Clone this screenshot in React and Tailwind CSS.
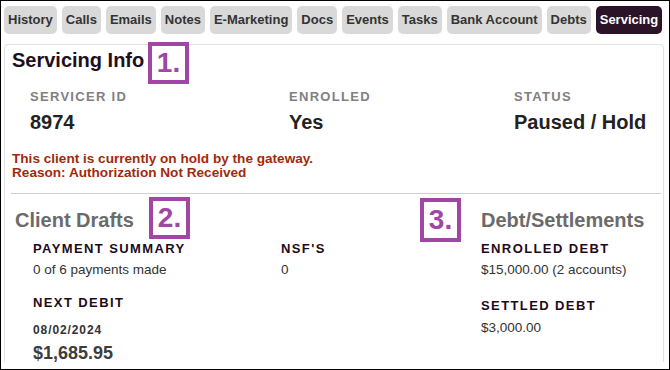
import React from "react";

const tabs = ["History", "Calls", "Emails", "Notes", "E-Marketing", "Docs", "Events", "Tasks", "Bank Account", "Debts", "Servicing"];

const Tab = ({ label, active }) => (
  <div
    className={`h-[28px] px-1 rounded-[5px] flex items-center text-[13px] font-bold whitespace-nowrap ${
      active ? "bg-[#2b1427] text-white" : "bg-[#d9d9d9] text-[#333]"
    }`}
  >
    {label}
  </div>
);

const Marker = ({ n, className }) => (
  <div
    className={`absolute w-[41px] h-[42px] border-4 border-[#a047a6] flex items-center justify-center text-[28px] leading-none font-bold text-[#a047a6] ${className}`}
  >
    {n}.
  </div>
);

const InfoItem = ({ label, value, className = "" }) => (
  <div className={className}>
    <div className="text-[13px] leading-[15px] font-bold tracking-[1.3px] text-[#808080]">{label}</div>
    <div className="mt-[6px] text-[20px] leading-[24px] font-bold text-[#222]">{value}</div>
  </div>
);

const Label = ({ children, className = "" }) => (
  <div className={`text-[13px] leading-[15px] font-bold tracking-[1.4px] text-[#1d0b1a] ${className}`}>{children}</div>
);

const Value = ({ children, className = "" }) => (
  <div className={`text-[13.5px] leading-[16px] text-[#333] ${className}`}>{children}</div>
);

export default function App() {
  return (
    <div className="relative w-[670px] h-[370px] border border-black bg-white overflow-hidden font-['Liberation_Sans',Arial,sans-serif]">
      <div className="flex gap-[5px] pl-[3px] pt-[5px]">
        {tabs.map((t) => (
          <Tab key={t} label={t} active={t === "Servicing"} />
        ))}
      </div>

      <div className="ml-[3px] mt-[10px] w-[660px] h-[318px] border border-b-0 border-[#e2e2e2] rounded-t-[4px]">
        <h1 className="ml-[7px] mt-[3px] text-[20px] leading-[24px] font-bold text-[#1e0f1e]">Servicing Info</h1>

        <div className="flex pl-[25px] mt-[17px]">
          <InfoItem label="SERVICER ID" value="8974" className="w-[259px]" />
          <InfoItem label="ENROLLED" value="Yes" className="w-[225px]" />
          <InfoItem label="STATUS" value="Paused / Hold" />
        </div>

        <div className="ml-[7px] mt-[18px] text-[13.6px] leading-[14px] font-bold text-[#a12a0c]">
          <p>This client is currently on hold by the gateway.</p>
          <p>Reason: Authorization Not Received</p>
        </div>

        <div className="ml-[6px] mt-[13px] w-[650px] h-px bg-[#cfcfcf]" />

        <div className="flex mt-[14px]">
          <div className="ml-[10px] w-[466px]">
            <h2 className="text-[20px] leading-[24px] font-bold text-[#6b6b6b]">Client Drafts</h2>
            <div className="pl-[18px] mt-[9px]">
              <div className="flex">
                <div className="w-[248px]">
                  <Label>PAYMENT SUMMARY</Label>
                  <Value className="mt-[6px]">0 of 6 payments made</Value>
                </div>
                <div>
                  <Label>NSF'S</Label>
                  <Value className="mt-[6px]">0</Value>
                </div>
              </div>
              <Label className="mt-[17px]">NEXT DEBIT</Label>
              <div className="mt-[13px] text-[12px] leading-[14px] font-bold tracking-[0.9px] text-[#333]">08/02/2024</div>
              <div className="mt-[6px] text-[18px] leading-[21px] font-bold text-[#3d3d3d]">$1,685.95</div>
            </div>
          </div>

          <div>
            <h2 className="text-[20px] leading-[24px] font-bold text-[#6b6b6b]">Debt/Settlements</h2>
            <div className="mt-[9px]">
              <Label>ENROLLED DEBT</Label>
              <Value className="mt-[6px]">$15,000.00 (2 accounts)</Value>
              <Label className="mt-[20px]">SETTLED DEBT</Label>
              <Value className="mt-[7px]">$3,000.00</Value>
            </div>
          </div>
        </div>
      </div>

      <Marker n={1} className="left-[147px] top-[41px] h-[41px]" />
      <Marker n={2} className="left-[148px] top-[196px]" />
      <Marker n={3} className="left-[419px] top-[197px] h-[44px]" />
    </div>
  );
}
